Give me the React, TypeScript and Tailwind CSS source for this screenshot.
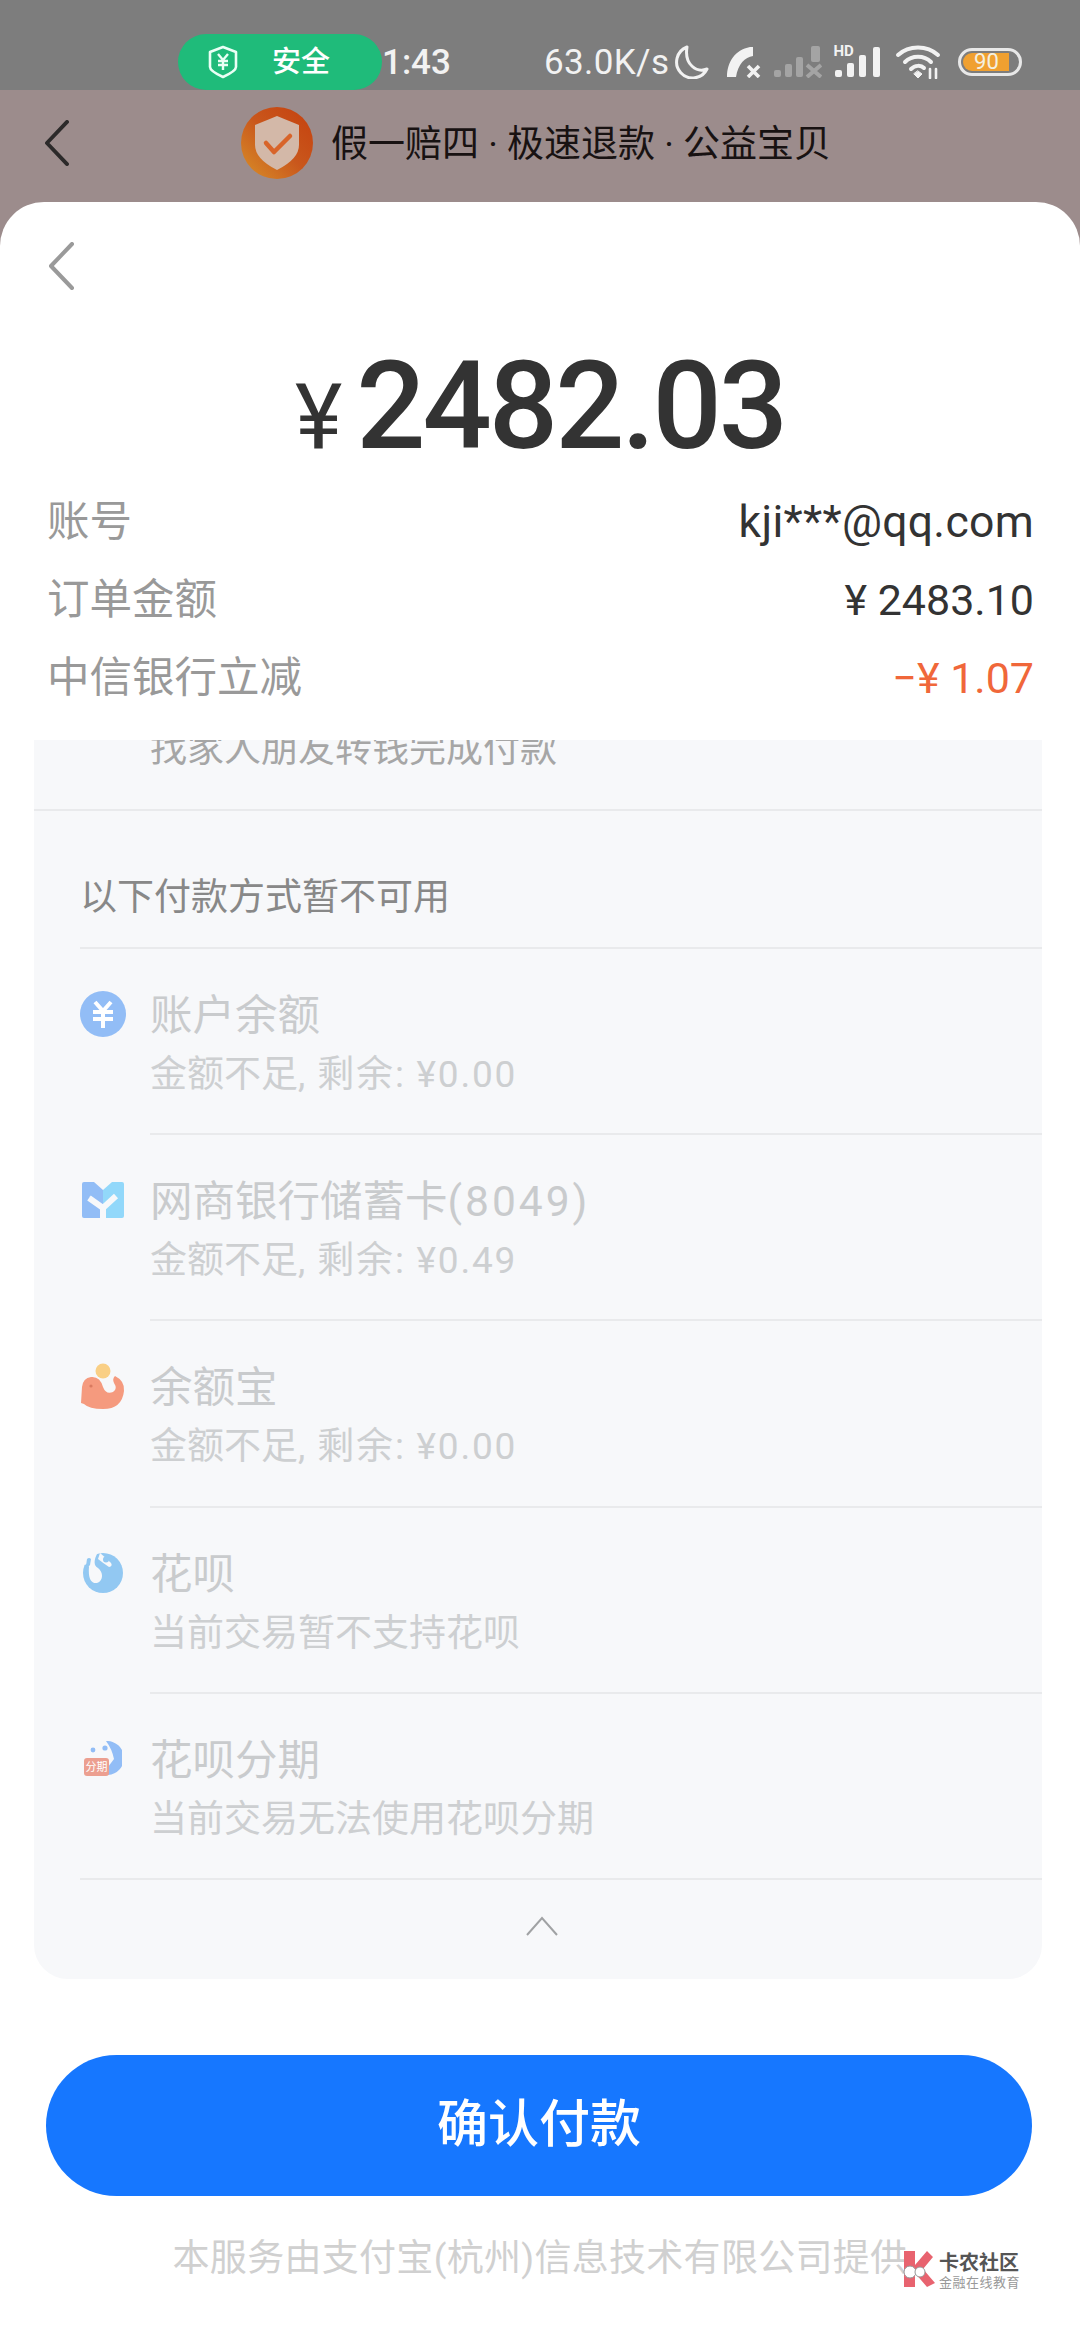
import React from "react";

const SANS = "font-['Roboto','Noto_Sans_CJK_SC',sans-serif]";

const Chevron = ({ className, stroke }: { className: string; stroke: string }) => (
  <svg viewBox="0 0 28 48" className={className} fill="none">
    <path d="M25 2 L4 24 L25 46" stroke={stroke} strokeWidth="4" strokeLinecap="round" strokeLinejoin="round" />
  </svg>
);

const ShieldYen = () => (
  <svg viewBox="0 0 30 34" className="h-[34px] w-[30px]" fill="none">
    <path d="M15 2 L28 7 V22 Q28 26 15 32 Q2 26 2 22 V7 Z" stroke="#eafff5" strokeWidth="2.6" strokeLinejoin="round" />
    <path d="M10 9 L15 15 L20 9 M15 15 V25 M10 16 H20 M10 20 H20" stroke="#eafff5" strokeWidth="2.4" />
  </svg>
);

const Moon = () => (
  <svg viewBox="0 0 34 34" className="h-[34px] w-[34px]" fill="none">
    <path d="M12 2 A16 16 0 1 0 32 24 C22 28 9 20 12 2 Z" stroke="#f2f2f2" strokeWidth="3" strokeLinejoin="round" />
  </svg>
);

const PhoneOff = () => (
  <svg viewBox="0 0 36 32" className="h-[32px] w-[36px]" fill="none">
    <path d="M1 31 C1 16 9 4 24 1 L27 1 L27 10 C19 11 12 18 10 31 Z" fill="#f2f2f2" />
    <path d="M22 20 L33 31 M33 20 L22 31" stroke="#f2f2f2" strokeWidth="3.6" />
  </svg>
);

const SignalX = () => (
  <svg viewBox="0 0 48 32" className="h-[32px] w-[48px]" fill="#a4a4a4">
    <rect x="0" y="24" width="7" height="7" rx="2" />
    <rect x="11" y="18" width="7" height="13" rx="2" />
    <rect x="22" y="11" width="7" height="20" rx="2" />
    <rect x="37" y="0" width="9" height="16" rx="2" />
    <path d="M33 19 L47 31 M47 19 L33 31" stroke="#a4a4a4" strokeWidth="4" />
  </svg>
);

const SignalHd = () => (
  <div className="relative h-[32px] w-[49px]">
    <svg viewBox="0 0 49 32" className="h-[32px] w-[49px]" fill="#f2f2f2">
      <rect x="2" y="24" width="7" height="7" rx="2" />
      <rect x="14" y="17" width="7" height="14" rx="2" />
      <rect x="26" y="9" width="7" height="22" rx="2" />
      <rect x="40" y="1" width="7" height="30" rx="2" />
    </svg>
    <span className="absolute left-0 top-[-2px] font-['Roboto',sans-serif] text-[15px] font-bold leading-[15px] text-[#f2f2f2]">HD</span>
  </div>
);

const Wifi = () => (
  <svg viewBox="0 0 46 34" className="h-[34px] w-[46px]" fill="none" stroke="#f2f2f2" strokeLinecap="round">
    <path d="M3 10 C14 0 32 0 43 10" strokeWidth="4" />
    <path d="M10 17 C17 10 29 10 36 17" strokeWidth="4" />
    <path d="M16 24 C20 20 26 20 29 23" strokeWidth="4" />
    <path d="M19 29 L23 33 L27 29 L23 26 Z" fill="#f2f2f2" strokeWidth="1" />
    <path d="M35 24 V33 M41 24 V33" strokeWidth="2.6" />
  </svg>
);

const Battery = () => (
  <div className="flex h-[28px] w-[64px] items-center rounded-full border-[3px] border-[#e8e8e8] p-[2px]">
    <div className="flex h-full w-[46px] items-center justify-center rounded-l-full rounded-r-[3px] bg-[#f0a030] font-['Roboto',sans-serif] text-[22px] leading-none text-[#f4f0e0]">
      90
    </div>
  </div>
);

const OrangeShield = () => (
  <svg viewBox="0 0 72 72" className="h-[72px] w-[72px]">
    <defs>
      <linearGradient id="badge" x1="0" y1="1" x2="1" y2="0">
        <stop offset="0" stopColor="#d99028" />
        <stop offset="0.5" stopColor="#c9571c" />
        <stop offset="1" stopColor="#c5400e" />
      </linearGradient>
    </defs>
    <circle cx="36" cy="36" r="36" fill="url(#badge)" />
    <path d="M36 9 L58 18 V38 Q58 52 36 63 Q14 52 14 38 V18 Z" fill="#d3b8a8" />
    <path d="M25 36 L33 45 L49 29" fill="none" stroke="#d8642a" strokeWidth="4.5" strokeLinecap="round" strokeLinejoin="round" />
  </svg>
);

const IconYen = () => (
  <svg viewBox="0 0 46 46" className="h-[46px] w-[46px]">
    <circle cx="23" cy="23" r="23" fill="#92bdf6" />
    <path d="M15 11 L23 20 L31 11 M23 20 V37 M13 21 H33 M13 28 H33" fill="none" stroke="#fff" strokeWidth="4" />
  </svg>
);

const IconBank = () => (
  <svg viewBox="0 0 42 36" className="h-[36px] w-[42px]">
    <path d="M2 0 H12 L21 8 L21 36 H14 V21 L7 14 L14 24 V36 H2 Q0 36 0 34 V2 Q0 0 2 0 Z" fill="#92bdf6" />
    <path d="M40 0 H30 L21 8 V36 H28 V24 L35 14 L28 24 V36 H40 Q42 36 42 34 V2 Q42 0 40 0 Z" fill="#92d8fa" />
    <path d="M7 16 L21 26 L34 14 M21 26 V36" fill="none" stroke="#f7f8fa" strokeWidth="6" />
  </svg>
);

const IconWhale = () => (
  <svg viewBox="0 0 44 46" className="h-[46px] w-[44px]">
    <path d="M1 24 Q2 15 10 14 Q19 13 22 24 Q25 32 32 29 Q37 26 33 20 Q31 16 34 13 Q44 18 43 28 Q41 46 22 46 Q8 46 3 41 L0 40 Z" fill="#f59a7e" />
    <circle cx="22" cy="8" r="7.5" fill="#f9cf85" />
    <circle cx="10" cy="23" r="1.6" fill="#d97a60" />
  </svg>
);

const IconHuabei = () => (
  <svg viewBox="0 0 40 40" className="h-[40px] w-[40px]">
    <circle cx="20" cy="20" r="20" fill="#92c8f2" />
    <path d="M0 -1 H15 C10 8 11 13 15 15 C21 20 20 28 14 30 C8 31 5 25 6 14 Z" fill="#f7f8fa" />
    <path d="M0 -1 H10 V6 L2 12 L-1 8 Z" fill="#f7f8fa" />
    <path d="M4 6 Q6 4 8 6 L7 12 Q5 15 3 13 Z" fill="#92c8f2" />
    <path d="M17 0 Q22 4 28 10 Q30 13 26 14 Q20 10 15 6 Z" fill="#f7f8fa" />
    <circle cx="23" cy="6.5" r="3" fill="#92c8f2" />
  </svg>
);

const IconInstall = () => (
  <div className="relative h-[36px] w-[38px]">
    <svg viewBox="0 0 38 36" className="absolute left-0 top-0 h-[36px] w-[38px]">
      <path d="M22 0 A17 17 0 0 1 24 34 L18 34 L30 18 Q28 8 22 0 Z" fill="#92bdf6" />
      <circle cx="9" cy="9" r="2.4" fill="#92bdf6" />
      <circle cx="21" cy="7" r="2.6" fill="#92bdf6" />
    </svg>
    <span className="absolute bottom-[1px] left-0 flex h-[18px] w-[25px] items-center justify-center rounded-[3px] bg-[#ec9f90] font-['Noto_Sans_CJK_SC',sans-serif] text-[11px] leading-none text-white">
      分期
    </span>
  </div>
);

const methods = [
  { icon: <IconYen />, title: "账户余额", wide: "", sub: "金额不足,", rest: "剩余: ¥0.00" },
  { icon: <IconBank />, title: "网商银行储蓄卡", wide: "(8049)", sub: "金额不足,", rest: "剩余: ¥0.49" },
  { icon: <IconWhale />, title: "余额宝", wide: "", sub: "金额不足,", rest: "剩余: ¥0.00" },
  { icon: <IconHuabei />, title: "花呗", wide: "", sub: "当前交易暂不支持花呗", rest: "" },
  { icon: <IconInstall />, title: "花呗分期", wide: "", sub: "当前交易无法使用花呗分期", rest: "" },
];

const InfoRow = ({ label, value, cls }: { label: string; value: string; cls: string }) => (
  <div className="flex h-[78px] items-center justify-between">
    <span className="text-[42.5px] text-[#999999]">{label}</span>
    <span className={cls}>{value}</span>
  </div>
);

export default function App() {
  return (
    <div className={`flex h-[2340px] w-[1080px] flex-col overflow-hidden bg-[#9c8c8c] ${SANS}`}>
      <div className="flex h-[90px] items-center bg-[#7d7d7d] pl-[178px] pt-[34px]">
        <div className="flex h-[56px] w-[204px] items-center rounded-full bg-[#1fbb7a] pl-[30px] text-white">
          <ShieldYen />
          <span className="ml-[34px] text-[29px] font-medium leading-none">安全</span>
        </div>
        <span className="text-[35px] font-medium leading-none text-[#f2f2f2]">1:43</span>
        <span className="ml-[93px] text-[35px] leading-none tracking-[0.4px] text-[#f2f2f2]">63.0K/s</span>
        <div className="ml-[6px] flex items-center">
          <Moon />
          <div className="ml-[17px]"><PhoneOff /></div>
          <div className="ml-[12px]"><SignalX /></div>
          <div className="ml-[11px]"><SignalHd /></div>
          <div className="ml-[13px]"><Wifi /></div>
          <div className="ml-[17px]"><Battery /></div>
        </div>
      </div>

      <div className="flex h-[112px] items-center pb-[6px] pl-[43px]">
        <Chevron className="h-[46px] w-[27px]" stroke="#2c2a2a" />
        <div className="ml-[171px] flex items-center">
          <OrangeShield />
          <span className="ml-[18px] mt-[2px] whitespace-nowrap text-[37px] leading-none text-[#181212]">
            假一赔四 · 极速退款 · 公益宝贝
          </span>
        </div>
      </div>

      <div className="flex flex-1 flex-col rounded-t-[44px] bg-white">
        <div className="px-[47px] pt-[40px]">
          <Chevron className="h-[48px] w-[28px]" stroke="#9a9a9a" />
        </div>

        <div className="mt-[52px] flex h-[130px] items-baseline justify-center text-[#333333]">
          <span className="text-[90px] leading-none">¥</span>
          <span className="ml-[14px] text-[122px] font-medium leading-[130px] tracking-[-3px]">2482.03</span>
        </div>

        <div className="mt-[11px] pl-[47px] pr-[46px]">
          <InfoRow label="账号" value="kji***@qq.com" cls="text-[44.5px] tracking-[0.3px] text-[#333333]" />
          <InfoRow label="订单金额" value="¥ 2483.10" cls="text-[43px] text-[#333333]" />
          <InfoRow label="中信银行立减" value="−¥ 1.07" cls="text-[43px] text-[#f0673a]" />
        </div>

        <div className="mx-[34px] mt-[23px] flex h-[1239px] w-[1008px] flex-col overflow-hidden rounded-b-[34px] bg-[#f7f8fa]">
          <div className="h-[71px] shrink-0 overflow-hidden border-b-2 border-[#e9eaec] pl-[116px]">
            <p className="mt-[-14px] text-[37px] leading-[48px] text-[#a6a6a6]">找家人朋友转钱完成付款</p>
          </div>
          <div className="flex h-[138px] shrink-0 flex-col">
            <div className="ml-[46px] flex h-[138px] items-center border-b-2 border-[#e9eaec] pt-[38px]">
              <span className="text-[37px] text-[#888888]">以下付款方式暂不可用</span>
            </div>
          </div>
          {methods.map((m, i) => (
            <div key={m.title} className="flex h-[186.2px] shrink-0 pl-[46px]">
              <div className="flex h-[130px] w-[70px] shrink-0 items-center">
                <div className="flex w-[46px] justify-center">{m.icon}</div>
              </div>
              <div
                className={`flex-1 border-b-2 border-[#e9eaec] pt-[40px] ${i === methods.length - 1 ? "ml-[-70px] pl-[70px]" : ""}`}
              >
                <p className="text-[42.5px] leading-[54px] text-[#c9cbcd]">
                  {m.title}
                  {m.wide && <span className="tracking-[3px]">{m.wide}</span>}
                </p>
                <p className="mt-[6px] text-[37px] leading-[52px] text-[#cdcfd1]">
                  {m.sub}
                  {m.rest && <span className="ml-[12px] tracking-[1.8px]">{m.rest}</span>}
                </p>
              </div>
            </div>
          ))}
          <div className="flex flex-1 justify-center pl-[8px] pt-[36px]">
            <svg viewBox="0 0 32 20" className="h-[20px] w-[32px]" fill="none">
              <path d="M1 19 L16 2 L31 19" stroke="#a0a2a4" strokeWidth="2" />
            </svg>
          </div>
        </div>

        <div className="relative flex flex-1 flex-col items-center">
          <button className="mr-[2px] mt-[76px] flex h-[141px] w-[986px] items-center justify-center rounded-full bg-[#1677ff] text-[51px] font-medium text-white">
            确认付款
          </button>
          <p className="mt-[39px] whitespace-nowrap text-[37px] leading-[48px] tracking-[0.3px] text-[#d0d0d0]">
            本服务由支付宝(杭州)信息技术有限公司提供
          </p>
          <div className="absolute left-[901px] top-[272px] flex items-start">
            <svg viewBox="0 0 36 36" className="h-[36px] w-[36px]">
              <path d="M3 0 H14 V14 L26 0 L32 6 L22 18 L34 32 L26 36 L14 22 V36 H3 Z" fill="#e8636f" />
              <circle cx="9" cy="21" r="6" fill="#fff" stroke="#999" strokeWidth="1" />
              <circle cx="19" cy="21" r="5" fill="#fff" stroke="#999" strokeWidth="1" />
            </svg>
            <div className="ml-[2px] flex flex-col items-start">
              <span className="text-[20px] font-bold leading-[24px] text-[#555555]">卡农社区</span>
              <span className="text-[13px] leading-[16px] tracking-[0.5px] text-[#999999]">金融在线教育</span>
            </div>
          </div>
        </div>
      </div>
    </div>
  );
}
